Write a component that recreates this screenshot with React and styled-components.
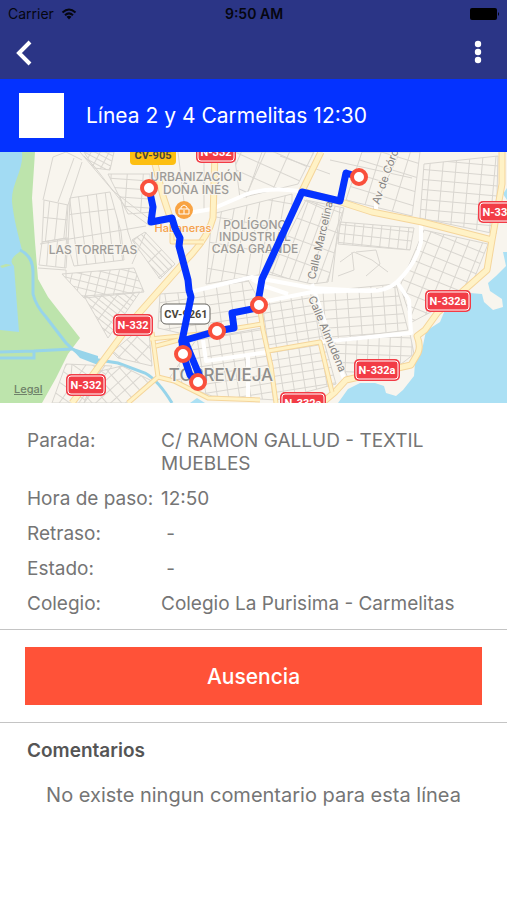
import React from "react";
import styled, { createGlobalStyle } from "styled-components";

const details = [
  { label: "Parada:", value: "C/ RAMON GALLUD - TEXTIL MUEBLES" },
  { label: "Hora de paso:", value: "12:50" },
  { label: "Retraso:", value: "\u00a0-" },
  { label: "Estado:", value: "\u00a0-" },
  { label: "Colegio:", value: "Colegio La Purisima - Carmelitas" },
];

const stops = [
  [149, 36],
  [359, 25],
  [259, 153],
  [217, 179],
  [183, 202],
  [198, 230],
];

const shields = [
  { text: "N-332", x: 216, y: 0 },
  { text: "N-332", x: 133, y: 173 },
  { text: "N-332", x: 86, y: 233 },
  { text: "N-332", x: 498, y: 60 },
  { text: "N-332a", x: 448, y: 149 },
  { text: "N-332a", x: 377, y: 218 },
  { text: "N-332a", x: 303, y: 251 },
];

// blocks of parallel streets: outline, angle and distance between streets
const districts = [
  { points: "70,46 110,40 121,80 124,108 74,114 68,94", angle: -7, w: 9, h: 70 },
  { points: "42,90 68,86 66,116 39,113", angle: 4, w: 9, h: 40 },
  { points: "44,48 68,53 66,86 42,90", angle: 6, w: 9, h: 60 },
  { points: "108,22 150,22 152,60 128,62", angle: 4, w: 16, h: 9 },
  { points: "132,88 145,80 175,112 160,127", angle: 46, w: 26, h: 5 },
  { points: "84,144 140,140 108,186", angle: 38, w: 12, h: 5 },
  { points: "62,122 134,116 144,140 84,146", angle: 14, w: 9, h: 7 },
  { points: "66,212 112,214 84,251 52,251", angle: 35, w: 16, h: 11 },
  { points: "112,200 148,170 152,214 118,206", angle: 42, w: 15, h: 9 },
  { points: "96,220 122,214 154,230 128,251 84,251", angle: 48, w: 10, h: 11 },
  { points: "160,142 190,140 248,128 260,150 264,170 192,184 158,176", angle: -8, w: 13, h: 9 },
  { points: "196,188 262,176 276,248 212,244 168,228", angle: -9, w: 11, h: 9 },
  { points: "262,150 310,140 336,232 276,248", angle: -9, w: 11, h: 8 },
  { points: "316,140 396,132 408,178 328,188", angle: -4, w: 12, h: 9 },
  { points: "332,190 410,182 414,202 396,216 348,226", angle: 2, w: 11, h: 9 },
  { points: "306,48 344,56 328,130 312,132 268,122", angle: 20, w: 9, h: 20 },
  { points: "340,70 414,76 410,98 338,92", angle: 6, w: 9, h: 9 },
  { points: "424,78 488,92 472,132 446,152 412,170 400,134", angle: 22, w: 13, h: 11 },
  { points: "362,0 420,0 412,64 346,48", angle: 17, w: 28, h: 14 },
  { points: "424,12 498,4 496,82 420,66", angle: 5, w: 13, h: 10 },
  { points: "212,62 292,42 292,60 264,122 206,132", angle: 10, w: 12, h: 26 },
  { points: "234,0 314,0 298,32 240,46", angle: 24, w: 22, h: 16 },
  { points: "84,0 114,0 110,18 94,16", angle: 28, w: 8, h: 5 },
];

// the same course is drawn twice, once for the edge and once for the filling
const mainRoads = [
  "M152 0L163 44L171 68M215 0L213 66Q208 86 186 108L133 168L72 251",
  "M321 0L302 39L341 50L372 60L422 70L492 88",
  "M502 0V32L492 88L487 118L462 140L438 160L425 178L417 184Q421 194 418 201L411 213L346 228L335 240L322 251",
].join("");

const sideRoads = [
  "M259 153L263 178L271 214L276 251M150 187L200 182L262 172M156 194L182 187",
  "M152 180L158 225L174 229L208 246L260 248M158 225L128 251",
  "M268 199L320 190L332 240M172 66V90H204M180 90V102",
].join("");

const Map = () => (
  <MapCanvas
    viewBox="0 0 507 251"
    preserveAspectRatio="xMidYMid slice"
    role="img"
    aria-label="Mapa de la línea en Torrevieja"
  >
    <defs>
      {districts.map(({ angle, w, h }, i) => (
        <pattern
          key={i}
          id={`streets-${i}`}
          width={w}
          height={h}
          patternUnits="userSpaceOnUse"
          patternTransform={`rotate(${angle})`}
        >
          <path
            d={`M0 0H${w}M0 0V${h}`}
            fill="none"
            stroke="#d9d6d0"
            strokeWidth="2"
          />
        </pattern>
      ))}
    </defs>

    <rect width="507" height="251" fill="#f8f5ee" />

    {/* lagoon and park on the west side */}
    <path
      d="M0 0H35L32 46L35 90L38 127L48 145L80 186L68 202L56 226L42 251H0Z"
      fill="#bde4ac"
    />
    <path
      d="M0 0H22C24 18 11 32 12 50C14 68 18 82 22 98C14 104 8 108 14 114L19 180L0 178Z"
      fill="#a2dbf3"
    />
    <path d="M0 114L6 112L12 113L2 116Z" fill="#bde4ac" />
    <Canal d="M20 98Q33 104 33 120V142Q36 154 46 165L66 191Q76 202 92 207L118 211L145 221Q158 228 172 251" />
    <Canal d="M0 200L34 199L72 197M0 206H34V199" />
    <path d="M70 195L98 204V213L80 206Z" fill="#97d4ea" />

    {/* sea */}
    <path
      d="M507 100H503L506 114L496 124L488 131L490 139L502 147L503 155L493 158L484 150L482 142L470 141L458 147L445 158L440 170L426 179L422 198L415 211L414 224L403 238L396 244L386 241L384 234L375 231H360L348 237L338 251H507Z"
      fill="#abe0f4"
    />
    <path d="M507 36L503 42L507 48Z" fill="#abe0f4" />
    <path d="M190 251L197 246L205 251Z" fill="#abe0f4" />

    {districts.map(({ points }, i) => (
      <polygon
        key={i}
        points={points}
        fill={`url(#streets-${i})`}
        stroke="#d9d6d0"
        strokeWidth="1"
      />
    ))}
    <Street d="M53 5L43 48M82 10L68 53M74 6L58 50M53 5L66 0L82 8M84 4L94 14L128 58L150 74M80 0L114 40M112 38L148 66M40 92L146 74M38 116L66 118V126M132 112L146 80M120 44L128 80L134 98M72 212L70 236M158 126L172 114M262 0L246 46M280 4L330 22M330 8L412 26M340 110L354 100L372 108L388 120M338 124L354 118L352 100M356 100L376 98L380 112L366 124M398 4L372 60M304 48L330 60M340 56L332 130M204 0V60M178 0L184 50" />

    <WhiteRoad d="M172 68L188 61L212 57L240 45Q262 34 300 39" />
    <WhiteRoad d="M421 70V90Q416 112 397 130Q386 140 366 139L312 136L252 125L190 140" />
    <WhiteRoad d="M397 130L409 148L411 181L320 190M262 150L312 140L376 138M252 127L264 134L288 142" />
    <WhiteRoad d="M312 132L345 230M203 188L206 209L268 200M248 204V248M376 58V48" />

    <RoadEdge d={mainRoads} />
    <RoadFill d={mainRoads} />
    <RoadEdge $thin d={sideRoads} />
    <RoadFill $thin d={sideRoads} />

    <Place x="93" y="102">LAS TORRETAS</Place>
    <Place x="196" y="29">URBANIZACIÓN</Place>
    <Place x="196" y="42">DOÑA INÉS</Place>
    <Place x="255" y="77">POLÍGONO</Place>
    <Place x="255" y="89">INDUSTRIAL</Place>
    <Place x="255" y="101">CASA GRANDE</Place>
    <City x="221" y="229">TORREVIEJA</City>
    <StreetName transform="translate(315 128) rotate(-77)">
      Calle Marcelina
    </StreetName>
    <StreetName transform="translate(308 146) rotate(67)">
      Calle Almudena
    </StreetName>
    <StreetName transform="translate(379 53) rotate(-70)">
      Av de Córcega
    </StreetName>

    <Shop x="183" y="80">Habaneras</Shop>
    <circle cx="184" cy="58" r="9" fill="#f8a343" />
    <path
      d="M179 57H189V62H179ZM181 57V55L184 53L187 55V57M184 58V62"
      fill="none"
      stroke="#fff"
      strokeWidth="1"
    />

    <rect x="130" y="-6" width="46" height="19" rx="4" fill="#fdbf12" />
    <ShieldText x="153" y="7" $dark>
      CV-905
    </ShieldText>
    <rect
      x="161"
      y="152"
      width="49"
      height="20"
      rx="5"
      fill="#fff"
      stroke="#66645f"
      strokeWidth="1"
    />
    <ShieldText x="186" y="166" $dark>
      CV-9261
    </ShieldText>
    {shields.map(({ text, x, y }) => {
      const w = text.length > 5 ? 46 : 40;
      return (
        <g key={`${x}-${y}`}>
          <rect x={x - w / 2} y={y - 11} width={w} height="22" rx="5" fill="#f23c46" />
          <rect
            x={x - w / 2 + 2}
            y={y - 9}
            width={w - 4}
            height="18"
            rx="3"
            fill="#f23c46"
            stroke="#fff"
          />
          <ShieldText x={x} y={y + 4}>
            {text}
          </ShieldText>
        </g>
      );
    })}

    <Route d="M149 36L153 55L151 70L172 66L175 76L180 86L179 94L188 128L189 138L191 145L182 189L217 179L234 176L232 161L257 156L262 127L302 40L340 49L346 21L359 25" />
    <Route d="M182 189L183 202L190 223L198 230L200 225L185 189" />
    {stops.map(([x, y]) => (
      <circle
        key={`${x}-${y}`}
        cx={x}
        cy={y}
        r="7"
        fill="#fff"
        stroke="#f9503c"
        strokeWidth="4"
      />
    ))}
  </MapCanvas>
);

const App = () => {
  return (
    <Page>
      <GlobalStyle />
      <StatusBar>
        <Carrier>
          Carrier
          <svg width="16" height="12" viewBox="0 0 16 12" aria-hidden="true">
            <path
              d="M1.500 4.500Q8 -1.500 14.500 4.500M4 7.200Q8 3.600 12 7.200"
              fill="none"
              stroke="#05060f"
              strokeWidth="2"
            />
            <path d="M5.500 8.800Q8 6.800 10.500 8.800L8 11.500Z" fill="#05060f" />
          </svg>
        </Carrier>
        <Clock>9:50 AM</Clock>
        <Battery>
          <svg width="30" height="12" viewBox="0 0 30 12" aria-hidden="true">
            <rect width="27" height="12" rx="2" />
            <path d="M28 4Q30 6 28 8Z" />
          </svg>
        </Battery>
      </StatusBar>

      <NavBar>
        <IconButton type="button" aria-label="Volver">
          <svg width="18" height="28" viewBox="0 0 18 28">
            <path
              d="M15 3L4 14L15 25"
              fill="none"
              stroke="#fff"
              strokeWidth="4"
            />
          </svg>
        </IconButton>
        <IconButton type="button" aria-label="Más opciones">
          <svg width="8" height="26" viewBox="0 0 8 26" fill="#fff">
            <circle cx="4" cy="4" r="3.200" />
            <circle cx="4" cy="12" r="3.200" />
            <circle cx="4" cy="20" r="3.200" />
          </svg>
        </IconButton>
      </NavBar>

      <LineHeader>
        <LineColor />
        <LineTitle>Línea 2 y 4 Carmelitas 12:30</LineTitle>
      </LineHeader>

      <MapArea>
        <Map />
        <Legal href="#legal">Legal</Legal>
      </MapArea>

      <Details>
        {details.map(({ label, value }) => (
          <React.Fragment key={label}>
            <dt>{label}</dt>
            <dd>{value}</dd>
          </React.Fragment>
        ))}
      </Details>

      <Actions>
        <AbsenceButton type="button">Ausencia</AbsenceButton>
      </Actions>

      <Comments>
        <CommentsTitle>Comentarios</CommentsTitle>
        <Empty>No existe ningun comentario para esta línea</Empty>
      </Comments>
    </Page>
  );
};

export default App;

const GlobalStyle = createGlobalStyle`
  * {
    box-sizing: border-box;
  }
  body {
    margin: 0;
    background: #fff;
    font-family: Inter, "Liberation Sans", sans-serif;
  }
`;

const Page = styled.main`
  display: flex;
  flex-direction: column;
  min-height: 100vh;
  color: #757575;
`;

const StatusBar = styled.div`
  display: grid;
  grid-template-columns: 1fr auto 1fr;
  align-items: center;
  height: 27px;
  padding: 0 7px 0 8px;
  background: #2b3586;
  color: #05060f;
  font-size: 14px;
`;

const Carrier = styled.span`
  display: flex;
  align-items: center;
  gap: 7px;
`;

const Clock = styled.span`
  font-weight: 600;
`;

const Battery = styled.span`
  display: flex;
  justify-content: flex-end;
`;

const NavBar = styled.header`
  display: flex;
  align-items: center;
  justify-content: space-between;
  height: 52px;
  padding: 0 15px;
  background: #2b3586;
`;

const IconButton = styled.button`
  display: flex;
  align-items: center;
  justify-content: center;
  padding: 0;
  min-width: 28px;
  border: none;
  background: none;
  cursor: pointer;

  &:first-child {
    justify-content: flex-start;
  }
`;

const LineHeader = styled.section`
  display: flex;
  align-items: center;
  gap: 22px;
  height: 73px;
  padding: 0 19px;
  background: #0432ff;
`;

const LineColor = styled.div`
  width: 45px;
  height: 45px;
  background: #fff;
`;

const LineTitle = styled.h1`
  margin: 0;
  color: #fff;
  font-size: 21px;
  font-weight: 400;
`;

const MapArea = styled.section`
  position: relative;
  overflow: hidden;
`;

const MapCanvas = styled.svg`
  display: block;
  width: 100%;
  height: 251px;
`;

const Canal = styled.path`
  fill: none;
  stroke: #97d4ea;
  stroke-width: 3px;
`;

const Street = styled.path`
  fill: none;
  stroke: #d9d6d0;
  stroke-width: 1px;
`;

const WhiteRoad = styled.path`
  fill: none;
  stroke: #fff;
  stroke-width: 4px;
  stroke-linejoin: round;
`;

const RoadEdge = styled.path`
  fill: none;
  stroke: #f5d59a;
  stroke-width: ${({ $thin }) => ($thin ? 5 : 7)}px;
  stroke-linejoin: round;
`;

const RoadFill = styled.path`
  fill: none;
  stroke: #fff2c6;
  stroke-width: ${({ $thin }) => ($thin ? 3 : 5)}px;
  stroke-linejoin: round;
`;

const Route = styled.path`
  fill: none;
  stroke: #0432ff;
  stroke-width: 7px;
  stroke-linecap: round;
  stroke-linejoin: round;
`;

const MapText = styled.text`
  paint-order: stroke;
  stroke: #f8f5ee;
  stroke-width: 2px;
`;

const Place = styled(MapText)`
  fill: #9d9b98;
  font-size: 12px;
  font-weight: 500;
  text-anchor: middle;
`;

const City = styled(MapText)`
  fill: #8f8e8c;
  font-size: 17px;
  font-weight: 500;
  text-anchor: middle;
`;

const StreetName = styled(MapText)`
  fill: #858381;
  font-size: 11px;
`;

const Shop = styled(MapText)`
  fill: #f5a04a;
  font-size: 11px;
  font-weight: 500;
  text-anchor: middle;
`;

const ShieldText = styled.text`
  fill: ${({ $dark }) => ($dark ? "#4a463c" : "#fff")};
  font-family: Roboto, "Liberation Sans", sans-serif;
  font-size: 11px;
  font-weight: 700;
  text-anchor: middle;
`;

const Legal = styled.a`
  position: absolute;
  left: 14px;
  bottom: 7px;
  color: #6f8169;
  font-size: 11px;
  font-weight: 500;
`;

const Details = styled.dl`
  display: grid;
  grid-template-columns: 122px 1fr;
  gap: 12px;
  margin: 0;
  padding: 26px 27px 14px;
  border-bottom: 1px solid #c4c4c4;
  font-size: 19px;
  line-height: 23px;

  dt {
    white-space: nowrap;
  }
  dd {
    margin: 0;
  }
`;

const Actions = styled.section`
  padding: 17px 25px;
  border-bottom: 1px solid #c4c4c4;
`;

const AbsenceButton = styled.button`
  display: block;
  width: 100%;
  height: 58px;
  border: none;
  background: #ff5238;
  color: #fff;
  font-family: inherit;
  font-size: 21px;
  font-weight: 500;
  cursor: pointer;
`;

const Comments = styled.section`
  padding: 16px 27px;
`;

const CommentsTitle = styled.h2`
  margin: 0 0 22px;
  color: #555;
  font-size: 19px;
  font-weight: 600;
  line-height: 23px;
`;

const Empty = styled.p`
  margin: 0;
  font-size: 20px;
  line-height: 23px;
  text-align: center;
`;
